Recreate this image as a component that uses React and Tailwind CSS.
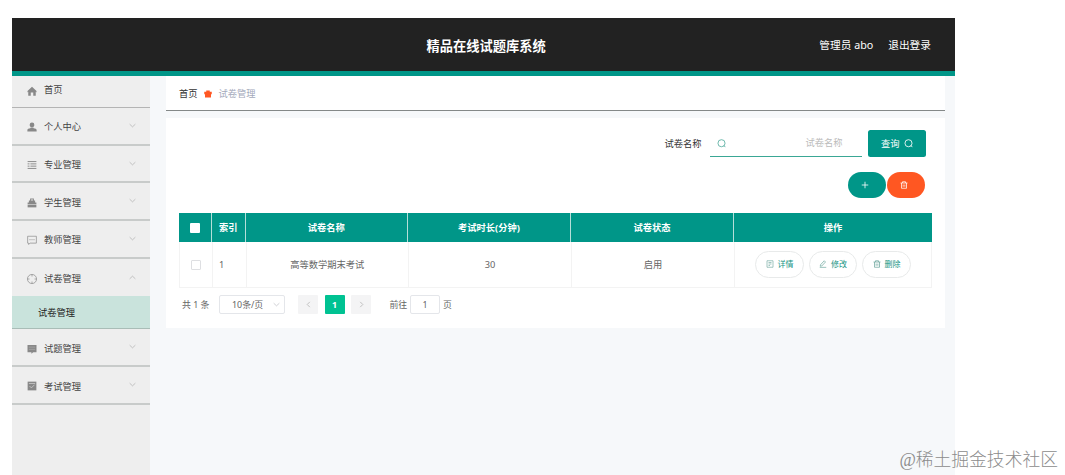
const iconPaths = {
  home: <path fill="currentColor" d="M8 1 .8 7.800v2.400l1.200-.9V15.500h4V10.500h4v5h4V9.300l1.200.9V7.800z" />,
  user: (
    <g fill="currentColor">
      <circle cx="8" cy="4.6" r="3.8" />
      <path d="M5.800 8.600h4.400l.4 1.400c2.600.3 4.800 1 4.800 3v2H.6v-2c0-2 2.200-2.700 4.800-3z" />
    </g>
  ),
  list: <path stroke="currentColor" strokeWidth="1.500" fill="none" d="M1 2.500h14M1 6.200h3M5.500 6.200H15M1 9.800h3M5.500 9.800H15M1 13.500h14" />,
  luggage: (
    <g fill="currentColor">
      <path d="M5 4V.8h6V4h2v3h2v3H1V7h2V4zM6.500 2.500V4h3V2.500z" />
      <path d="M1 10.800h14V15H1z" />
    </g>
  ),
  chat: (
    <g fill="none" stroke="currentColor" strokeWidth="1.100">
      <path d="M1 2h14v11H5l-2.500 2v-2H1z" />
      <path strokeWidth="1.400" d="M4 7.500h1.600M7.200 7.500h1.600M10.400 7.500H12" />
    </g>
  ),
  help: (
    <g fill="none" stroke="currentColor" strokeWidth="1.100">
      <circle cx="8" cy="8" r="7.300" />
      <path d="M8 1v3M8 12v3M1 8h3M12 8h3" />
    </g>
  ),
  comment: (
    <g>
      <path fill="currentColor" d="M.8 1.500h14.400V13H10l-3 2.500V13H.8z" />
      <path stroke="#ccc" strokeWidth=".6" d="M3 5h10M3 8.500h10" />
    </g>
  ),
  paper: (
    <g>
      <path fill="currentColor" d="M1 1h14v14H1z" />
      <path stroke="#ddd" fill="none" d="M3 4h10M4 8l3 3 5-5" />
    </g>
  ),
  search: (
    <g fill="none" stroke="currentColor" strokeWidth="1.500">
      <circle cx="8" cy="7.500" r="6.300" />
      <path d="m12 11.500 3 3" />
    </g>
  ),
  plus: <path stroke="currentColor" strokeWidth="1.600" d="M8 1.500v13M1.500 8h13" />,
  trash: (
    <path fill="none" stroke="currentColor" strokeWidth="1.500" d="M1 4h14M5 4V1.500h6V4M3 4v10.500h10V4M6.300 7v4.500M9.700 7v4.500" />
  ),
  detail: <path fill="none" stroke="currentColor" strokeWidth="1.300" d="M2 1.500h12v13H2zM5 5h6M5 8h6M5 11h3" />,
  edit: <path fill="none" stroke="currentColor" strokeWidth="1.400" d="M10.500 1.500 13 4l-7.500 8-3 .5.5-3zM1.500 14.700h13" />,
  brick: <path fill="currentColor" d="M4.500 3.500V1h7v2.500H15.500v5H14V15H2V8.500H.5v-5z" />,
  down: <path fill="none" stroke="currentColor" strokeWidth="1.500" d="m1.500 5 6.500 6 6.500-6" />,
  up: <path fill="none" stroke="currentColor" strokeWidth="1.500" d="m1.500 11 6.500-6 6.500 6" />,
  left: <path fill="none" stroke="currentColor" strokeWidth="1.800" d="M11 2 5 8l6 6" />,
  right: <path fill="none" stroke="currentColor" strokeWidth="1.800" d="m5 2 6 6-6 6" />,
};

const Icon = ({ name, className }) => (
  <svg viewBox="0 0 16 16" className={`shrink-0 ${className}`}>
    {iconPaths[name]}
  </svg>
);

const menus = [
  { label: '个人中心', icon: 'user' },
  { label: '专业管理', icon: 'list' },
  { label: '学生管理', icon: 'luggage' },
  { label: '教师管理', icon: 'chat' },
  { label: '试卷管理', icon: 'help', children: ['试卷管理'] },
  { label: '试题管理', icon: 'comment' },
  { label: '考试管理', icon: 'paper' },
];

const actions = [
  { label: '详情', icon: 'detail' },
  { label: '修改', icon: 'edit' },
  { label: '删除', icon: 'trash' },
];

const GRID = 'grid grid-cols-[33px_33.500px_162.500px_163px_163px_1fr]';

const Header = () => (
  <header className="grid h-[58px] shrink-0 grid-cols-3 items-center border-b-[5px] border-[#009688] bg-[#222] text-white">
    <div />
    <h1 className="pl-1.5 pt-1 text-center text-[13.250px] font-bold">精品在线试题库系统</h1>
    <div className="flex justify-end gap-[15px] pr-6 pt-0.5 text-[10.700px]">
      <span>管理员 abo</span>
      <span>退出登录</span>
    </div>
  </header>
);

const Sidebar = () => (
  <aside className="w-[138.500px] shrink-0 bg-[#eee] text-[9.250px] text-[#444]">
    <div className="flex h-8 items-center border-b border-[#b4b4b4] pb-[3px] pl-[15.500px]">
      <Icon name="home" className="mr-[7px] mt-0.5 size-[10px] text-[#888]" />
      首页
    </div>
    {menus.map((menu) => (
      <div key={menu.label}>
        <div
          className={`flex h-[37.700px] items-center pl-[15.500px] pr-3.5 pt-[3px] ${menu.children ? '' : 'border-b-2 border-[#c8cbca]'}`}
        >
          <Icon name={menu.icon} className="mr-[7px] size-[10px] text-[#888]" />
          <span className="flex-1">{menu.label}</span>
          <Icon name={menu.children ? 'up' : 'down'} className="mb-1 size-[7px] text-[#aaa]" />
        </div>
        {menu.children?.map((child) => (
          <div key={child} className="flex h-[33px] items-center border-b border-[#a9bdb7] bg-[#c9e3dc] pl-[26.500px] text-[#222]">
            {child}
          </div>
        ))}
      </div>
    ))}
  </aside>
);

const SearchBar = () => (
  <div className="flex h-[27px] items-center justify-end pr-[19.500px] text-[9.250px]">
    <span className="text-[#333]">试卷名称</span>
    <div className="ml-2 mr-[6.500px] flex h-full w-[152px] items-center border-b border-[#3aa795] pl-[7px] pr-[19px]">
      <Icon name="search" className="size-[9px] text-[#55ad9f]" />
      <span className="flex-1 text-right text-[#bbb]">试卷名称</span>
    </div>
    <button className="flex h-[27px] w-[57.500px] items-center justify-center gap-1 rounded-[2.500px] bg-[#009688] text-white">
      查询
      <Icon name="search" className="size-[9px]" />
    </button>
  </div>
);

const DataTable = () => (
  <div className="mx-[13px] mt-[15px] text-center text-[9.250px]">
    <div className={`${GRID} h-[29px] items-stretch bg-[#009688] font-bold text-white`}>
      <div className="flex items-center justify-center border-r border-[#b5dfd9] pt-px">
        <span className="size-[10px] rounded-[1px] bg-white" />
      </div>
      {['索引', '试卷名称', '考试时长(分钟)', '试卷状态'].map((title) => (
        <div key={title} className="flex items-center justify-center border-r border-[#b5dfd9] pt-px">
          {title}
        </div>
      ))}
      <div className="flex items-center justify-center pt-px">操作</div>
    </div>
    <div className={`${GRID} h-[46.500px] border-b border-l border-[#f3f3f3] text-[#666]`}>
      <div className="flex items-center justify-center border-r border-[#f3f3f3] pt-px">
        <span className="size-[9.500px] rounded-[1px] border border-[#dedfe2]" />
      </div>
      <div className="flex items-center border-r border-[#f3f3f3] pl-1.5 pt-px">1</div>
      <div className="flex items-center justify-center border-r border-[#f3f3f3] pt-px">高等数学期末考试</div>
      <div className="flex items-center justify-center border-r border-[#f3f3f3] pt-px">30</div>
      <div className="flex items-center justify-center border-r border-[#f3f3f3] pt-px">启用</div>
      <div className="flex items-center justify-center gap-[5px] border-r border-[#f3f3f3]">
        {actions.map((action) => (
          <button
            key={action.label}
            className="flex h-[27px] w-[48.500px] items-center justify-center gap-1 rounded-full border border-[#e8eaea] text-[8px] text-[#189585]"
          >
            <Icon name={action.icon} className="size-2 text-[#6fa79f]" />
            {action.label}
          </button>
        ))}
      </div>
    </div>
  </div>
);

const Pagination = () => (
  <div className="mt-[6.500px] flex h-5 items-center pl-4 text-[8.900px] text-[#666]">
    <span className="w-[37px] whitespace-nowrap">共 1 条</span>
    <div className="flex h-[19px] w-[66px] items-center justify-between rounded-[2px] border border-[#e4e6ea] pl-3 pr-1">
      10条/页
      <Icon name="down" className="size-[7px] text-[#b8bbc0]" />
    </div>
    <span className="ml-[13px] flex h-[19px] w-5 items-center justify-center rounded-[1px] bg-[#f4f4f5]">
      <Icon name="left" className="size-[7px] text-[#b4b4b4]" />
    </span>
    <span className="ml-[6.500px] flex h-[19px] w-5 items-center justify-center rounded-[1px] bg-[#00c292] font-bold text-white">1</span>
    <span className="ml-[6.500px] flex h-[19px] w-5 items-center justify-center rounded-[1px] bg-[#f4f4f5]">
      <Icon name="right" className="size-[7px] text-[#b4b4b4]" />
    </span>
    <span className="ml-[18.500px] w-[20.500px]">前往</span>
    <span className="flex h-[19px] w-[30px] items-center justify-center rounded-[2px] border border-[#e4e6ea]">1</span>
    <span className="ml-[3px]">页</span>
  </div>
);

const App = () => {
  return (
    <div className="relative h-[475px] overflow-hidden bg-white pl-[11.500px] pt-[18px] font-['Noto_Sans','Noto_Sans_CJK_SC',sans-serif]">
      <div className="flex h-[457px] w-[943.500px] flex-col">
        <Header />
        <div className="flex min-h-0 flex-1">
          <Sidebar />
          <main className="flex-1 bg-[#f6f8fa] pl-4 pr-2.5">
            <div className="flex h-[34.500px] items-center border-b border-[#848888] bg-white pl-[13px] pt-[3px] text-[9.250px]">
              <span className="text-[#333]">首页</span>
              <Icon name="brick" className="mx-[6.500px] size-2 text-[#ff5722]" />
              <span className="text-[#a3a9bb]">试卷管理</span>
            </div>
            <section className="mt-[7.500px] h-[210px] bg-white pt-3">
              <SearchBar />
              <div className="mt-[15px] flex justify-end gap-px pr-5">
                <button className="flex h-[25.500px] w-[38px] items-center justify-center rounded-full bg-[#009688] text-white">
                  <Icon name="plus" className="mr-1 size-2" />
                </button>
                <button className="flex h-[25.500px] w-[38px] items-center justify-center rounded-full bg-[#ff5722] text-white">
                  <Icon name="trash" className="mr-1 size-2" />
                </button>
              </div>
              <DataTable />
              <Pagination />
            </section>
          </main>
        </div>
      </div>
      <div className="absolute bottom-[3px] right-[7px] font-['Liberation_Serif','Noto_Sans_CJK_SC',serif] text-[17.800px] font-light leading-6 text-[#8c8c8c]">
        @稀土掘金技术社区
      </div>
    </div>
  );
};

export default App;
